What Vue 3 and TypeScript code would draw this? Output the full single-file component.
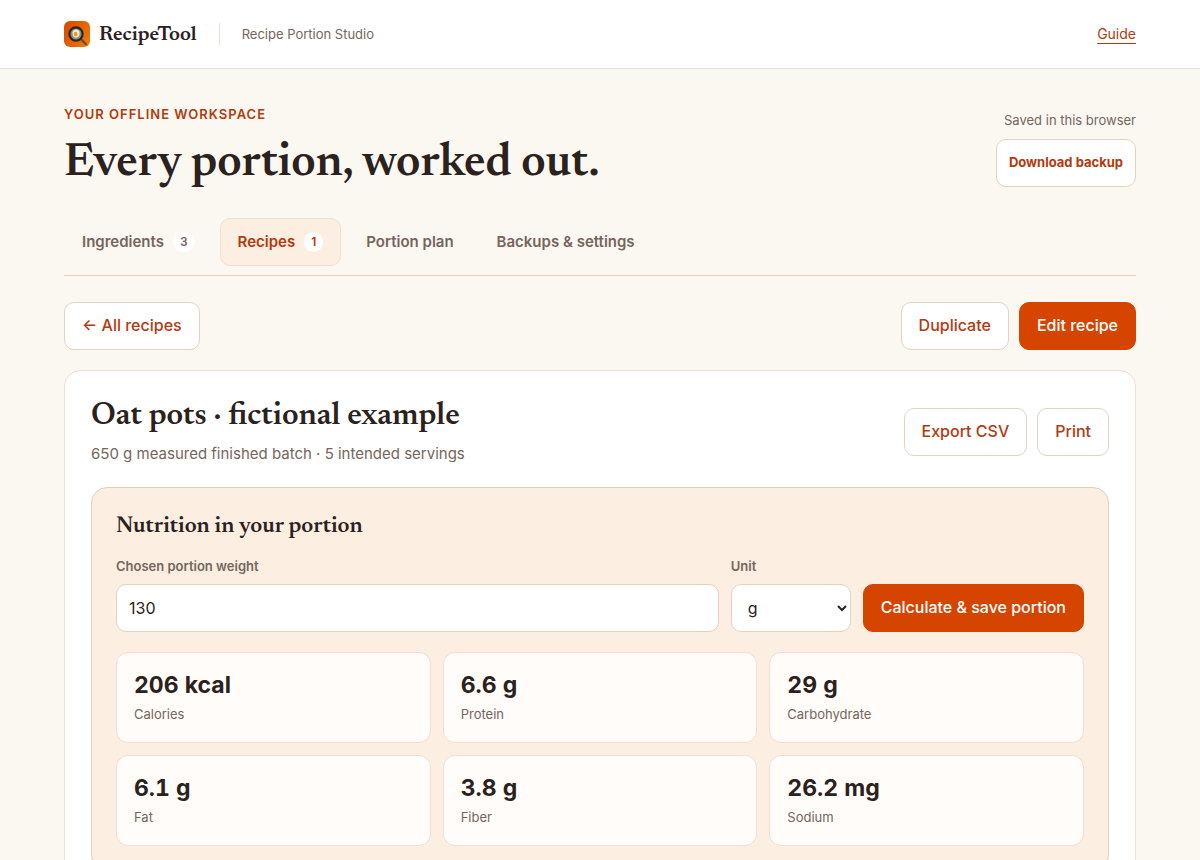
<script setup lang="ts">
import { ref } from 'vue'

interface Tab {
  id: string
  label: string
  count?: number
}

interface Nutrient {
  name: string
  value: string
}

const tabs: Tab[] = [
  { id: 'ingredients', label: 'Ingredients', count: 3 },
  { id: 'recipes', label: 'Recipes', count: 1 },
  { id: 'plan', label: 'Portion plan' },
  { id: 'settings', label: 'Backups & settings' },
]

const nutrients: Nutrient[] = [
  { name: 'Calories', value: '206 kcal' },
  { name: 'Protein', value: '6.6 g' },
  { name: 'Carbohydrate', value: '29 g' },
  { name: 'Fat', value: '6.1 g' },
  { name: 'Fiber', value: '3.8 g' },
  { name: 'Sodium', value: '26.2 mg' },
]

const activeTab = ref('recipes')
const portionWeight = ref('130')
const unit = ref('g')
</script>

<template>
  <div class="page">
    <header class="topbar">
      <div class="wrap topbar-inner">
        <a class="brand" href="#">
          <svg class="logo" viewBox="0 0 26 26" aria-hidden="true">
            <defs>
              <linearGradient id="logo-bg" x1="0" y1="0.2" x2="1" y2="0.8">
                <stop offset="0" stop-color="#d84a04" />
                <stop offset="1" stop-color="#f07a04" />
              </linearGradient>
            </defs>
            <rect width="26" height="26" rx="6" fill="url(#logo-bg)" />
            <path d="M17 18.2L22 23.2" stroke="#5c4d3f" stroke-width="2.2" stroke-linecap="round" />
            <circle cx="12" cy="13" r="6.6" fill="#8d8f86" stroke="#2b2622" stroke-width="2.2" />
            <path d="M8.6 11Q9.6 7.8 12.6 8.6Q16 9.4 15.6 12.6Q15.6 16.6 12 16.8Q8 16.4 8.6 11Z" fill="#f1ecd9" />
            <ellipse cx="11.6" cy="13.2" rx="1.9" ry="2.4" fill="#f59a16" />
          </svg>
          <span class="brand-name">RecipeTool</span>
        </a>
        <span class="product">Recipe Portion Studio</span>
        <a class="guide" href="#guide">Guide</a>
      </div>
    </header>

    <main class="wrap">
      <section class="hero">
        <div>
          <p class="eyebrow">YOUR OFFLINE WORKSPACE</p>
          <h1>Every portion, worked out.</h1>
        </div>
        <div class="backup">
          <span class="saved">Saved in this browser</span>
          <button type="button" class="btn btn-small">Download backup</button>
        </div>
      </section>

      <nav class="tabs" aria-label="Workspace">
        <button
          v-for="tab in tabs"
          :key="tab.id"
          type="button"
          class="tab"
          :class="{ active: tab.id === activeTab }"
          @click="activeTab = tab.id"
        >
          {{ tab.label }}
          <span v-if="tab.count" class="count">{{ tab.count }}</span>
        </button>
      </nav>

      <div class="actions">
        <button type="button" class="btn">← All recipes</button>
        <div class="group">
          <button type="button" class="btn">Duplicate</button>
          <button type="button" class="btn btn-primary">Edit recipe</button>
        </div>
      </div>

      <article class="card">
        <div class="card-head">
          <div>
            <h2>Oat pots · fictional example</h2>
            <p class="summary">650 g measured finished batch · 5 intended servings</p>
          </div>
          <div class="group">
            <button type="button" class="btn">Export CSV</button>
            <button type="button" class="btn">Print</button>
          </div>
        </div>

        <section class="panel">
          <h3>Nutrition in your portion</h3>
          <form class="portion" @submit.prevent>
            <div class="field field-weight">
              <label for="weight">Chosen portion weight</label>
              <input id="weight" v-model="portionWeight" type="text" inputmode="decimal" />
            </div>
            <div class="field field-unit">
              <label for="unit">Unit</label>
              <select id="unit" v-model="unit">
                <option value="g">g</option>
                <option value="oz">oz</option>
              </select>
            </div>
            <button type="submit" class="btn btn-primary">Calculate &amp; save portion</button>
          </form>

          <div class="nutrients">
            <div v-for="item in nutrients" :key="item.name" class="nutrient">
              <strong>{{ item.value }}</strong>
              <span>{{ item.name }}</span>
            </div>
          </div>
        </section>
      </article>
    </main>
  </div>
</template>

<style>
body {
  background: #fbf8f1;
}
</style>

<style scoped>
.page,
.page * {
  box-sizing: border-box;
}

.page {
  font-family: Inter, 'Liberation Sans', sans-serif;
  font-size: 16px;
  line-height: 24px;
  color: #2b211d;
  padding-bottom: 48px;
}

.wrap {
  max-width: 1200px;
  margin: 0 auto;
  padding: 0 64px;
}

h1,
h2,
h3,
p {
  margin: 0;
}

h1,
h2,
h3,
.brand-name {
  font-family: Newsreader, 'Liberation Serif', serif;
  font-weight: 600;
}

button,
input,
select {
  font: inherit;
}

.topbar {
  background: #fff;
  border-bottom: 1px solid #efdfd2;
}

.topbar-inner {
  display: flex;
  align-items: center;
  height: 68px;
}

.brand {
  display: flex;
  align-items: center;
  gap: 9px;
  color: inherit;
  text-decoration: none;
}

.logo {
  width: 26px;
  height: 26px;
}

.brand-name {
  padding-top: 4px;
  font-size: 21px;
}

.product {
  margin-left: 22px;
  padding-left: 22px;
  border-left: 1px solid #efdfd2;
  font-size: 13px;
  line-height: 22px;
  color: #75655c;
}

.guide {
  margin-left: auto;
  font-size: 14px;
  color: #b23a0e;
  text-underline-offset: 4px;
}

.hero {
  display: flex;
  justify-content: space-between;
  align-items: flex-end;
  padding-top: 36px;
}

.eyebrow {
  font-size: 13px;
  line-height: 18px;
  font-weight: 600;
  letter-spacing: 1px;
  color: #b23a0e;
}

h1 {
  margin-top: 18px;
  font-size: 47px;
  line-height: 46px;
}

.backup {
  display: flex;
  flex-direction: column;
  align-items: flex-end;
  gap: 9px;
}

.saved {
  font-size: 13px;
  line-height: 20px;
  color: #75655c;
}

.btn {
  min-height: 48px;
  padding: 0 17px 2px;
  border: 1px solid #e2d3c1;
  border-radius: 10px;
  background: #fff;
  color: #b23a0e;
  font-weight: 500;
  white-space: nowrap;
  cursor: pointer;
}

.btn-small {
  padding: 0 12px 2px;
  font-size: 13px;
  font-weight: 700;
}

.btn-primary {
  border-color: #d64500;
  background: #d64500;
  color: #fff;
}

.tabs {
  display: flex;
  gap: 7px;
  margin-top: 31px;
  padding-bottom: 9px;
  border-bottom: 1px solid #e2d0bc;
}

.tab {
  display: flex;
  align-items: center;
  gap: 9px;
  height: 48px;
  padding: 0 17px;
  border: 1px solid transparent;
  border-radius: 10px;
  background: transparent;
  color: #75655c;
  font-size: 15px;
  font-weight: 600;
  cursor: pointer;
}

.tab.active {
  border-color: #f0dfd2;
  background: #fceee1;
  color: #b23a0e;
}

.count {
  padding: 0 7px;
  border-radius: 10px;
  background: #fff;
  font-size: 12px;
  line-height: 20px;
}

.actions {
  display: flex;
  justify-content: space-between;
  margin-top: 26px;
}

.group {
  display: flex;
  gap: 10px;
}

.card {
  margin-top: 20px;
  padding: 26px;
  border: 1px solid #efdfd2;
  border-radius: 16px;
  background: #fff;
}

.card-head {
  display: flex;
  justify-content: space-between;
  align-items: center;
}

h2 {
  font-size: 32px;
  line-height: 38px;
}

.summary {
  margin-top: 6px;
  font-size: 15px;
  line-height: 26px;
  color: #75655c;
}

.panel {
  margin-top: 20px;
  padding: 24px;
  border: 1px solid #e2d0bc;
  border-radius: 16px;
  background: #fceee1;
}

h3 {
  font-size: 23px;
  line-height: 30px;
}

.portion {
  display: flex;
  align-items: flex-end;
  gap: 12px;
  margin-top: 14px;
}

.field {
  display: flex;
  flex-direction: column;
  gap: 8px;
}

.field-weight {
  flex: 1;
}

.field-unit {
  width: 120px;
}

label {
  font-size: 13px;
  line-height: 20px;
  font-weight: 600;
  color: #75655c;
}

input,
select {
  width: 100%;
  height: 48px;
  padding: 0 12px;
  border: 1px solid #e2d3c1;
  border-radius: 10px;
  background: #fff;
  color: #2b211d;
}

.nutrients {
  display: grid;
  grid-template-columns: repeat(3, 1fr);
  gap: 12px;
  margin-top: 20px;
}

.nutrient {
  display: flex;
  flex-direction: column;
  gap: 4px;
  padding: 17px;
  border: 1px solid #f0dfd2;
  border-radius: 12px;
  background: #fffcf9;
}

.nutrient strong {
  font-size: 23px;
  line-height: 30px;
  font-weight: 700;
  font-variant-numeric: tabular-nums;
}

.nutrient span {
  font-size: 13px;
  line-height: 21px;
  color: #75655c;
}
</style>
